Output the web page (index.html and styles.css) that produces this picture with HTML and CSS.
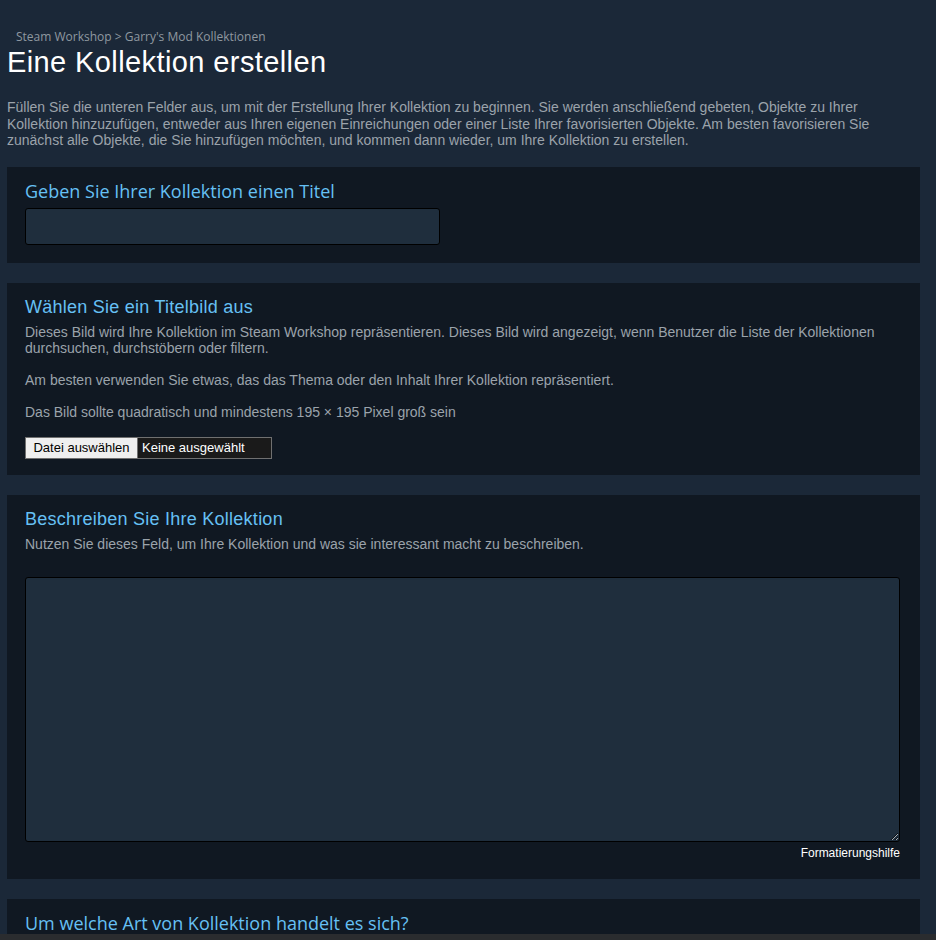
FILE: index.html
```html
<!DOCTYPE html>
<html lang="de">
<head>
    <meta charset="UTF-8">
    <meta name="viewport" content="width=device-width, initial-scale=1.0">
    <title>Eine Kollektion erstellen</title>
    <link rel="stylesheet" href="styles.css">
</head>
<body>
    <div class="page">
        <!-- Breadcrumb + title -->
        <div class="breadcrumb">Steam Workshop &gt; Garry's Mod Kollektionen</div>
        <h1 class="page-title">Eine Kollektion erstellen</h1>
        <p class="intro">Füllen Sie die unteren Felder aus, um mit der Erstellung Ihrer Kollektion zu beginnen. Sie werden anschließend gebeten, Objekte zu Ihrer Kollektion hinzuzufügen, entweder aus Ihren eigenen Einreichungen oder einer Liste Ihrer favorisierten Objekte. Am besten favorisieren Sie zunächst alle Objekte, die Sie hinzufügen möchten, und kommen dann wieder, um Ihre Kollektion zu erstellen.</p>

        <!-- Title -->
        <div class="panel panel-title">
            <h2 class="panel-heading motiva">Geben Sie Ihrer Kollektion einen Titel</h2>
            <input class="text-input" type="text">
        </div>

        <!-- Preview image -->
        <div class="panel panel-image">
            <h2 class="panel-heading">Wählen Sie ein Titelbild aus</h2>
            <p class="panel-desc">Dieses Bild wird Ihre Kollektion im Steam Workshop repräsentieren. Dieses Bild wird angezeigt, wenn Benutzer die Liste der Kollektionen durchsuchen, durchstöbern oder filtern.</p>
            <p class="panel-desc">Am besten verwenden Sie etwas, das das Thema oder den Inhalt Ihrer Kollektion repräsentiert.</p>
            <p class="panel-desc">Das Bild sollte quadratisch und mindestens 195 × 195 Pixel groß sein</p>
            <div class="file-picker">
                <span class="file-button">Datei auswählen</span>
                <span class="file-name">Keine ausgewählt</span>
            </div>
        </div>

        <!-- Description -->
        <div class="panel panel-description">
            <h2 class="panel-heading">Beschreiben Sie Ihre Kollektion</h2>
            <p class="panel-desc">Nutzen Sie dieses Feld, um Ihre Kollektion und was sie interessant macht zu beschreiben.</p>
            <textarea class="text-area"></textarea>
            <div class="format-help">Formatierungshilfe</div>
        </div>

        <!-- Type -->
        <div class="panel panel-type">
            <h2 class="panel-heading motiva">Um welche Art von Kollektion handelt es sich?</h2>
        </div>
    </div>
    <div class="bottom-bar"></div>
</body>
</html>
```

FILE: styles.css
```css
/* General body styles */
body {
    font-family: "Liberation Sans", Arial, sans-serif;
    margin: 0;
    padding: 0;
    background-color: #1b2838;
    color: #9ba3ab;
    overflow: hidden;
}

.page {
    padding: 29px 16px 40px 7px;
}

/* Header */
.breadcrumb {
    font-family: "Open Sans", "Noto Sans", sans-serif;
    font-size: 12px;
    line-height: 16px;
    color: #8f98a0;
    padding-left: 9px;
}
.page-title {
    margin: 1px 0 0 0;
    font-size: 29px;
    line-height: 32px;
    letter-spacing: 0.4px;
    font-weight: normal;
    color: #ffffff;
}
.intro {
    margin: 21px 0 18px 0;
    font-size: 14px;
    line-height: 16.5px;
}

/* Panels */
.panel {
    background-color: #101822;
    padding: 13px 20px 18px 18px;
    margin-bottom: 20px;
}
.panel-heading {
    margin: 0;
    font-size: 18px;
    line-height: 22px;
    letter-spacing: 0.25px;
    font-weight: normal;
    color: #66c0f4;
}
.panel-heading.motiva {
    font-family: "Open Sans", "Noto Sans", sans-serif;
    letter-spacing: 0;
}
.panel-desc {
    margin: 6px 0 0 0;
    font-size: 14px;
    line-height: 16px;
}
.panel-desc + .panel-desc {
    margin-top: 16px;
}

/* Title input */
.text-input {
    display: block;
    margin-top: 6px;
    width: 415px;
    height: 37px;
    box-sizing: border-box;
    background-color: #1f2e3d;
    border: 1px solid #000000;
    border-radius: 3px;
    color: #ffffff;
    outline: none;
}

/* File picker */
.panel-image {
    padding-bottom: 16px;
}
.file-picker {
    display: flex;
    width: 247px;
    height: 22px;
    margin-top: 17px;
    box-sizing: border-box;
    border: 1px solid #707070;
    font-size: 13px;
    line-height: 20px;
}
.file-button {
    background-color: #efefef;
    color: #000000;
    padding: 0 7px;
    border-right: 1px solid #707070;
    width: 112px;
    box-sizing: border-box;
    text-align: center;
}
.file-name {
    flex: 1;
    background-color: #1a1a1a;
    color: #ffffff;
    padding-left: 4px;
}

/* Description textarea */
.panel-description {
    padding-bottom: 19px;
}
.text-area {
    display: block;
    margin-top: 25px;
    width: 100%;
    height: 265px;
    box-sizing: border-box;
    background-color: #1f2e3d;
    border: 1px solid #000000;
    border-radius: 3px;
    color: #ffffff;
    outline: none;
}
.format-help {
    margin-top: 4px;
    text-align: right;
    font-size: 12px;
    line-height: 14px;
    color: #ffffff;
}

/* Scrollbar strip at the bottom */
.bottom-bar {
    position: fixed;
    left: 0;
    right: 0;
    bottom: 0;
    height: 6px;
    background-color: #2a2c2f;
}
```
